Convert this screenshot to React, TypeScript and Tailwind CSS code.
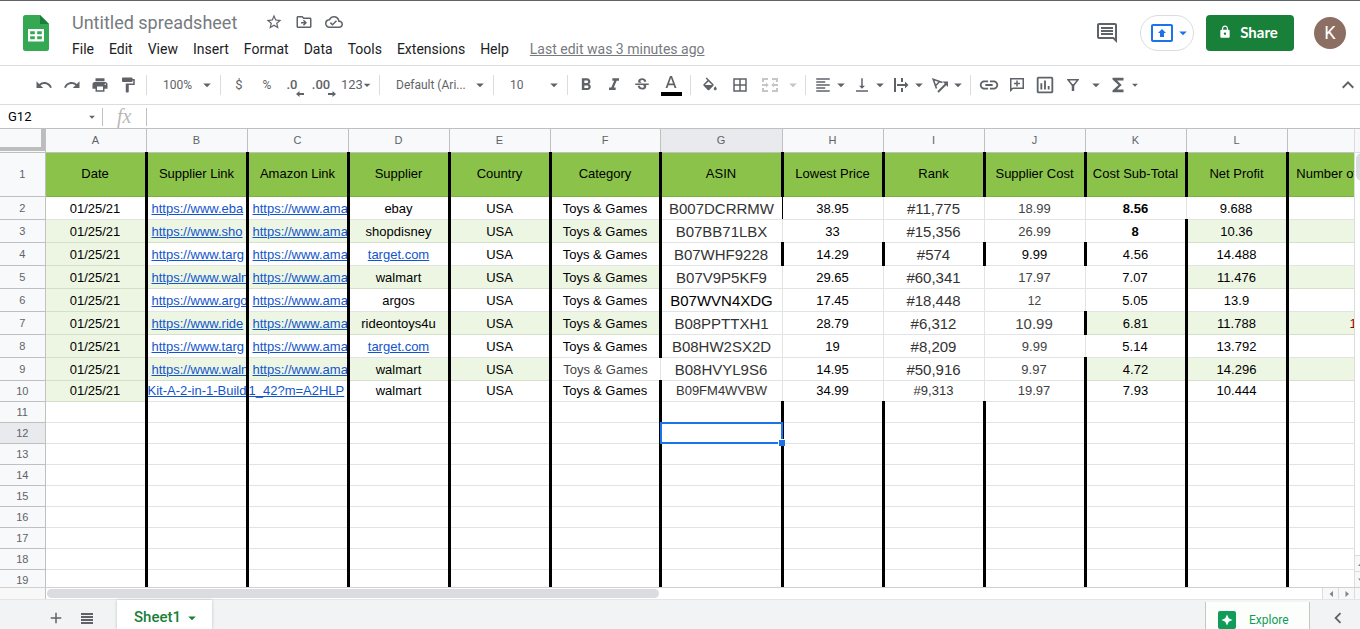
import type { ReactNode } from 'react';
import clsx from 'clsx';
import {
  MdAdd,
  MdArrowDropDown,
  MdBorderAll,
  MdChevronLeft,
  MdFormatAlignLeft,
  MdFormatBold,
  MdFormatItalic,
  MdFormatPaint,
  MdFunctions,
  MdInsertLink,
  MdKeyboardArrowUp,
  MdLock,
  MdOutlineCloudDone,
  MdOutlineDriveFileMove,
  MdOutlineInsertChart,
  MdOutlineInsertComment,
  MdPresentToAll,
  MdPrint,
  MdRedo,
  MdStarBorder,
  MdStrikethroughS,
  MdUndo,
  MdVerticalAlignBottom,
} from 'react-icons/md';

type Cell = {
  text: string;
  href?: string;
  className?: string;
};

const menus = ['File', 'Edit', 'View', 'Insert', 'Format', 'Data', 'Tools', 'Extensions', 'Help'];

const columns = [
  { key: 'A', title: 'Date', width: 'w-[101px]' },
  { key: 'B', title: 'Supplier Link', width: 'w-[101px]' },
  { key: 'C', title: 'Amazon Link', width: 'w-[101px]' },
  { key: 'D', title: 'Supplier', width: 'w-[101px]' },
  { key: 'E', title: 'Country', width: 'w-[101px]' },
  { key: 'F', title: 'Category', width: 'w-[110px]' },
  { key: 'G', title: 'ASIN', width: 'w-[122px]' },
  { key: 'H', title: 'Lowest Price', width: 'w-[101px]' },
  { key: 'I', title: 'Rank', width: 'w-[101px]' },
  { key: 'J', title: 'Supplier Cost', width: 'w-[101px]' },
  { key: 'K', title: 'Cost Sub-Total', width: 'w-[101px]' },
  { key: 'L', title: 'Net Profit', width: 'w-[101px]' },
  { key: 'M', title: 'Number of Reviews', width: 'w-[131px]' },
];

// supplier url, amazon url, supplier, asin, price, rank, cost, sub-total, profit, reviews
const products = [
  ['https://www.eba', 'https://www.ama', 'ebay', 'B007DCRRMW', '38.95', '#11,775', '18.99', '8.56', '9.688', ''],
  ['https://www.sho', 'https://www.ama', 'shopdisney', 'B07BB71LBX', '33', '#15,356', '26.99', '8', '10.36', ''],
  ['https://www.targ', 'https://www.ama', 'target.com', 'B07WHF9228', '14.29', '#574', '9.99', '4.56', '14.488', ''],
  ['https://www.waln', 'https://www.ama', 'walmart', 'B07V9P5KF9', '29.65', '#60,341', '17.97', '7.07', '11.476', ''],
  ['https://www.argo', 'https://www.ama', 'argos', 'B07WVN4XDG', '17.45', '#18,448', '12', '5.05', '13.9', ''],
  ['https://www.ride', 'https://www.ama', 'rideontoys4u', 'B08PPTTXH1', '28.79', '#6,312', '10.99', '6.81', '11.788', '1'],
  ['https://www.targ', 'https://www.ama', 'target.com', 'B08HW2SX2D', '19', '#8,209', '9.99', '5.14', '13.792', ''],
  ['https://www.waln', 'https://www.ama', 'walmart', 'B08HVYL9S6', '14.95', '#50,916', '9.97', '4.72', '14.296', ''],
  ['Kit-A-2-in-1-Build', '1_42?m=A2HLP', 'walmart', 'B09FM4WVBW', '34.99', '#9,313', '19.97', '7.93', '10.444', ''],
];

const rowNumbers = Array.from({ length: 19 }, (_, i) => i + 1);

// right edge of a cell: heavy rule, hairline, or plain gridline
function edge(col: string, row: number) {
  const thick = 'border-r-[3px] border-r-black';
  const thin = 'border-r border-r-[#e2e3e3]';
  if (row === 1 || row > 10) return col === 'M' ? thin : thick;
  switch (col) {
    case 'F':
      return row === 9 ? thin : thick;
    case 'G':
      if (row === 2) return 'border-r border-r-black';
      return row === 4 ? thick : thin;
    case 'H':
    case 'I':
      return row === 4 ? thick : thin;
    case 'J':
      return [4, 7, 9, 10].includes(row) ? thick : thin;
    case 'K':
      return row === 2 ? thin : thick;
    case 'M':
      return thin;
    default:
      return thick;
  }
}

function isShaded(col: string, row: number) {
  if (row < 3 || row > 10) return false;
  if (col === 'A') return true;
  if ('GHIJ'.includes(col) || row % 2 === 0) return false;
  if (col === 'F') return row !== 9;
  if (col === 'K') return row === 7 || row === 9;
  return true;
}

function cellAt(col: string, row: number): Cell {
  const p = products[row - 2];
  if (!p) return { text: '' };
  const last = row === 10;
  switch (col) {
    case 'A':
      return { text: '01/25/21' };
    case 'B':
      return { text: p[0], href: '#supplier', className: last ? 'text-left' : 'text-left pl-1' };
    case 'C':
      return { text: p[1], href: '#amazon', className: last ? 'text-left' : 'text-left pl-1' };
    case 'D':
      return { text: p[2], href: p[2] === 'target.com' ? '#target' : undefined };
    case 'E':
      return { text: 'USA' };
    case 'F':
      return { text: 'Toys & Games', className: row === 9 ? 'text-[#434343]' : '' };
    case 'G':
      return { text: p[3], className: clsx(!last && 'text-[15px]', row !== 6 && 'text-[#333333]') };
    case 'H':
      return { text: p[4] };
    case 'I':
      return { text: p[5], className: clsx('text-[#333333]', !last && 'text-[15px]') };
    case 'J':
      return { text: p[6], className: clsx(row !== 4 && 'text-[#434343]', row === 7 && 'text-[15px]', row === 6 && 'text-xs') };
    case 'K':
      return { text: p[7], className: row < 4 ? 'font-bold' : '' };
    case 'L':
      return { text: p[8] };
    default:
      return { text: p[9], className: 'text-[#980000]' };
  }
}

function SheetsLogo() {
  return (
    <svg viewBox="0 0 26 36" className="h-9 w-[26px]" aria-label="Sheets home">
      <path d="M2.5 0H17l9 9v24.5a2.5 2.5 0 0 1-2.5 2.5h-21A2.5 2.5 0 0 1 0 33.500V2.500A2.500 2.500 0 0 1 2.500 0z" fill="#34a853" />
      <path d="M17 0l9 9h-9z" fill="#188038" />
      <path d="M5 14h16v12.500H5z" fill="#fff" />
      <path d="M7.200 16.300h4.600v2.900H7.200zM14.200 16.300h4.600v2.900h-4.600zM7.200 21.300h4.600v2.900H7.200zM14.200 21.300h4.600v2.900h-4.600z" fill="#34a853" />
    </svg>
  );
}

function Caret({ small }: { small?: boolean }) {
  return <MdArrowDropDown className={clsx('shrink-0', small ? 'size-3.5' : 'size-[18px]')} />;
}

function ToolButton({ label, className = 'w-7', children }: { label: string; className?: string; children: ReactNode }) {
  return (
    <button type="button" aria-label={label} title={label} className={clsx('flex h-7 shrink-0 items-center justify-center', className)}>
      {children}
    </button>
  );
}

function DropTool({ label, children }: { label: string; children: ReactNode }) {
  return (
    <button type="button" aria-label={label} title={label} className="flex h-7 w-[39px] shrink-0 items-center pl-1">
      {children}
      <Caret />
    </button>
  );
}

function ToolSelect({ label, value, className }: { label: string; value: string; className: string }) {
  return (
    <label className={clsx('flex h-7 shrink-0 items-center pl-3', className)}>
      <select aria-label={label} className="min-w-0 flex-1 appearance-none bg-transparent text-xs outline-none">
        <option>{value}</option>
      </select>
      <Caret />
    </label>
  );
}

function Separator() {
  return <div className="mx-1 h-5 w-px shrink-0 bg-[#dadce0]" />;
}

function Decimal({ text, more }: { text: string; more?: boolean }) {
  return (
    <span className="relative text-[13px] leading-4 font-medium">
      {text}
      <svg viewBox="0 0 8 6" className={clsx('absolute -right-1.5 -bottom-1 h-1.5 w-2', more && 'rotate-180')}>
        <path d="M0 3l3.500-3v2H8v2H3.500v2z" fill="currentColor" />
      </svg>
    </span>
  );
}

function Header() {
  return (
    <header className="flex h-[66px] shrink-0 items-start justify-between border-t border-b border-t-[#5f6368] border-b-[#dadce0] pr-3.5 pl-[23px]">
      <div className="flex pt-3.5">
        <a href="#home">
          <SheetsLogo />
        </a>
        <div className="-mt-1 ml-[23px]">
          <div className="flex h-6 items-center text-[#5f6368]">
            <h1 className="text-[18px] leading-6 text-[#777b80]">Untitled spreadsheet</h1>
            <div className="mb-0.5 ml-7 flex items-center gap-3">
              <button type="button" aria-label="Star"><MdStarBorder className="size-[18px]" /></button>
              <button type="button" aria-label="Move"><MdOutlineDriveFileMove className="size-[18px]" /></button>
              <button type="button" aria-label="Saved to Drive"><MdOutlineCloudDone className="size-[18px]" /></button>
            </div>
          </div>
          <nav className="mt-1 flex h-5 items-center gap-[15px] text-sm text-[#202124]">
            {menus.map(m => (
              <button key={m} type="button">{m}</button>
            ))}
            <a href="#history" className="ml-1.5 text-[#777b80] underline">Last edit was 3 minutes ago</a>
          </nav>
        </div>
      </div>

      <div className="flex items-center pt-3.5">
        <button type="button" aria-label="Comments" className="mr-[21px] text-[#5f6368]">
          <MdOutlineInsertComment className="size-6" />
        </button>
        <button type="button" aria-label="Present" className="mr-3 flex h-9 w-[54px] items-center justify-center rounded-full border border-[#dadce0] pl-2 text-[#1a73e8]">
          <MdPresentToAll className="size-6 shrink-0" />
          <Caret />
        </button>
        <button type="button" className="mr-5 flex h-9 w-[88px] items-center justify-center gap-2 rounded bg-[#188038] pr-1 pb-0.5 font-['Lato',sans-serif] text-[15px] font-bold text-white">
          <MdLock className="size-3.5" />
          Share
        </button>
        <button type="button" aria-label="Account" className="size-8 rounded-full bg-[#8d6e63] text-lg text-white">K</button>
      </div>
    </header>
  );
}

function Toolbar() {
  const icon = 'size-[18px] shrink-0';
  return (
    <div className="flex h-[39px] shrink-0 items-center border-b border-[#dadce0] pl-[30px] text-xs text-[#5f6368]">
      <ToolButton label="Undo"><MdUndo className={icon} /></ToolButton>
      <ToolButton label="Redo"><MdRedo className={icon} /></ToolButton>
      <ToolButton label="Print"><MdPrint className={icon} /></ToolButton>
      <ToolButton label="Paint format"><MdFormatPaint className={icon} /></ToolButton>
      <Separator />
      <ToolSelect label="Zoom" value="100%" className="w-[65px]" />
      <Separator />
      <ToolButton label="Currency"><span className="text-[13px]">$</span></ToolButton>
      <ToolButton label="Percent">%</ToolButton>
      <ToolButton label="Fewer decimals" className="w-7 pr-1.5"><Decimal text=".0" /></ToolButton>
      <ToolButton label="More decimals" className="w-7 pr-1"><Decimal text=".00" more /></ToolButton>
      <ToolButton label="More formats" className="w-[38px] pl-1">
        <span className="text-[13px]">123</span>
        <MdArrowDropDown className="-ml-1 size-[18px]" />
      </ToolButton>
      <Separator />
      <ToolSelect label="Font" value="Default (Ari..." className="w-[105px]" />
      <Separator />
      <ToolSelect label="Font size" value="10" className="w-[65px]" />
      <Separator />
      <ToolButton label="Bold"><MdFormatBold className="size-5" /></ToolButton>
      <ToolButton label="Italic"><MdFormatItalic className="size-5" /></ToolButton>
      <ToolButton label="Strikethrough"><MdStrikethroughS className={icon} /></ToolButton>
      <ToolButton label="Text color" className="w-[30px]">
        <svg viewBox="0 0 22 22" className="size-[22px]">
          <path d="M10 2L5.500 14h1.900l1-2.800h5.200l1 2.800h1.900L12 2zm-1 7.500L11 4l2 5.500z" fill="currentColor" />
          <path d="M1 18h21v4H1z" fill="#000" />
        </svg>
      </ToolButton>
      <Separator />
      <ToolButton label="Fill color" className="w-[30px]">
        <svg viewBox="0 -2 24 24" className={icon} fill="currentColor">
          <path d="M16.560 8.940L7.620 0 6.210 1.410l2.380 2.380-5.150 5.150c-.59.59-.59 1.540 0 2.120l5.500 5.500c.29.29.68.44 1.060.44s.77-.15 1.060-.44l5.500-5.500c.59-.58.59-1.530 0-2.120zM5.210 10L10 5.210 14.790 10H5.210zM19 11.500s-2 2.170-2 3.500c0 1.100.9 2 2 2s2-.9 2-2c0-1.330-2-3.500-2-3.500z" />
        </svg>
      </ToolButton>
      <ToolButton label="Borders" className="w-[30px]"><MdBorderAll className={icon} /></ToolButton>
      <ToolButton label="Merge cells" className="w-[30px] text-[#c4c6c8]">
        <svg viewBox="0 0 16 14" className="h-3.5 w-4" fill="none" stroke="currentColor" strokeWidth="2">
          <path d="M1 4V1h5M10 1h5v3M1 10v3h5M10 13h5v-3M0 7h5M16 7h-5" />
          <path d="M4 4.500v5L6.800 7zM12 4.500v5L9.200 7z" fill="currentColor" stroke="none" />
        </svg>
      </ToolButton>
      <ToolButton label="Merge type" className="w-4 text-[#c4c6c8]"><Caret /></ToolButton>
      <Separator />
      <DropTool label="Horizontal align"><MdFormatAlignLeft className={icon} /></DropTool>
      <DropTool label="Vertical align"><MdVerticalAlignBottom className={icon} /></DropTool>
      <DropTool label="Text wrapping">
        <svg viewBox="0 0 18 18" className={icon} fill="none" stroke="currentColor" strokeWidth="2">
          <path d="M3 2v14M10 2v4M10 12v4M5 9h9" />
          <path d="M13 5.500L16.500 9 13 12.500z" fill="currentColor" stroke="none" />
        </svg>
      </DropTool>
      <DropTool label="Text rotation">
        <svg viewBox="0 0 18 18" className={icon} fill="none" stroke="currentColor" strokeWidth="1.600">
          <path d="M5.500 12.500L2.200 3.200l9.300 3.300M8.700 5.500L4.500 9.700" />
          <path d="M7 16l8-8" strokeWidth="2" />
          <path d="M11.500 5.500H17V11z" fill="currentColor" stroke="none" />
        </svg>
      </DropTool>
      <Separator />
      <ToolButton label="Insert link"><MdInsertLink className="size-[22px]" /></ToolButton>
      <ToolButton label="Insert comment">
        <svg viewBox="0 0 14 14" className="size-3.5" fill="none" stroke="currentColor">
          <path d="M.75 13V.75h12.500v9.500H2.500" strokeWidth="1.500" />
          <path d="M0 14v-4h4z" fill="currentColor" stroke="none" />
          <path d="M7 2.500v6M4 5.500h6" strokeWidth="1.500" />
        </svg>
      </ToolButton>
      <ToolButton label="Insert chart"><MdOutlineInsertChart className="size-[22px]" /></ToolButton>
      <ToolButton label="Filter">
        <svg viewBox="0 0 12 12" className="size-3" fill="none" stroke="currentColor" strokeWidth="1.500">
          <path d="M1 .75h10L6.800 6H5.200z" />
          <path d="M6 5v7" strokeWidth="2.500" />
        </svg>
      </ToolButton>
      <ToolButton label="Filter views" className="w-[18px]"><Caret /></ToolButton>
      <ToolButton label="Functions" className="w-[26px]"><MdFunctions className="size-[22px]" /></ToolButton>
      <ToolButton label="More functions" className="w-2"><Caret small /></ToolButton>
      <button type="button" aria-label="Hide the menus" className="ml-auto">
        <MdKeyboardArrowUp className="size-6" />
      </button>
    </div>
  );
}

function FormulaBar() {
  return (
    <div className="flex h-6 shrink-0 items-center border-b border-[#c0c0c0]">
      <input aria-label="Name box" defaultValue="G12" className="w-[85px] pl-2 text-[13px] text-black outline-none" />
      <span className="flex w-[17px] items-center text-[#5f6368]"><Caret small /></span>
      <div className="h-[18px] w-px bg-[#c0c0c0]" />
      <span className="w-[43px] pb-0.5 pl-3.5 font-['Liberation_Serif',serif] text-xl leading-5 text-[#b8b8b8] italic">fx</span>
      <div className="h-[18px] w-px bg-[#c0c0c0]" />
      <input aria-label="Formula" className="min-w-0 flex-1 px-2 text-[13px] outline-none" />
    </div>
  );
}

function Grid() {
  return (
    <table className="w-[1418px] table-fixed border-collapse font-['Liberation_Sans',sans-serif] text-[13px] leading-4 text-black">
      <colgroup>
        <col className="w-[45px]" />
        {columns.map(c => (
          <col key={c.key} className={c.width} />
        ))}
      </colgroup>
      <thead>
        <tr className="h-[23px] bg-[#f8f9fa] text-[11px] text-[#5f6368]">
          <th className="border-r border-b border-[#c0c0c0] p-0 align-top">
            <div className="h-[22px] border-r-4 border-b-4 border-[#bdbdbd]" />
          </th>
          {columns.map(c => (
            <th key={c.key} className={clsx('border-r border-b border-[#c0c0c0] p-0 font-normal', c.key === 'G' && 'bg-[#e8eaed]')}>
              {c.key === 'M' ? '' : c.key}
            </th>
          ))}
        </tr>
      </thead>
      <tbody>
        {rowNumbers.map(row => (
          <tr key={row} className={row === 1 ? 'h-11' : row < 10 ? 'h-[23px]' : 'h-[21px]'}>
            <th
              className={clsx(
                'border-r border-b border-[#c0c0c0] p-0 text-[11px] leading-4 font-normal text-[#5f6368]',
                row === 12 ? 'bg-[#e8eaed]' : 'bg-[#f8f9fa]',
              )}
            >
              {row}
            </th>
            {columns.map(c => {
              const selected = c.key === 'G' && row === 12;
              const cell: Cell = row === 1 ? { text: c.title } : cellAt(c.key, row);
              return (
                <td
                  key={c.key}
                  className={clsx(
                    'border-b p-0 whitespace-nowrap',
                    row === 1 ? 'border-b-[#7fb043] bg-[#8bc34a] text-center align-middle' : 'align-bottom',
                    row > 1 && (isShaded(c.key, row) ? 'border-b-[#d6decd] bg-[#edf6e3]' : 'border-b-[#e2e3e3]'),
                    edge(c.key, row),
                    selected ? 'relative' : 'overflow-hidden',
                  )}
                >
                  {cell.text && (
                    <div className={clsx('overflow-hidden text-center', row > 1 && 'pb-0.5', cell.className)}>
                      {cell.href ? <a href={cell.href} className="text-[#1155cc] underline">{cell.text}</a> : cell.text}
                    </div>
                  )}
                  {selected && (
                    <div className="absolute -inset-x-0.5 -inset-y-px border-2 border-[#1a73e8]">
                      <div className="absolute -right-1 -bottom-1 size-[7px] border-t border-l border-white bg-[#1a73e8]" />
                    </div>
                  )}
                </td>
              );
            })}
          </tr>
        ))}
      </tbody>
    </table>
  );
}

function ScrollArrow({ label, d, className }: { label: string; d: string; className: string }) {
  return (
    <button type="button" aria-label={label} className={clsx('flex shrink-0 items-center justify-center border-[#dadce0] bg-[#f8f8f8] text-[#80868b]', className)}>
      <svg viewBox="0 0 6 6" className="size-1.5 shrink-0">
        <path d={d} fill="currentColor" />
      </svg>
    </button>
  );
}

function BottomBar() {
  return (
    <footer className="flex h-[30px] shrink-0 border-t border-[#e3e5e8] bg-[#f1f3f4] text-[#5f6368]">
      <button type="button" aria-label="Add sheet" className="ml-[47px] flex w-[18px] items-center pt-1.5">
        <MdAdd className="size-[18px]" />
      </button>
      <button type="button" aria-label="All sheets" className="ml-4 flex w-3 items-center pt-2">
        <svg viewBox="0 0 12 11" className="h-[11px] w-3">
          <path d="M0 0h12v2H0zM0 3h12v2H0zM0 6h12v2H0zM0 9h12v2H0z" fill="currentColor" />
        </svg>
      </button>
      <button type="button" className="ml-6 flex w-[95px] items-center justify-center gap-0.5 bg-white pt-1.5 pl-1.5 text-[15px] font-medium text-[#188038] shadow-[0_0_3px_#c0c0c0]">
        Sheet1
        <Caret />
      </button>
      <button type="button" className="mt-0.5 ml-auto flex w-[105px] items-center border-x border-[#c4c7c5] bg-[#fbfefb] pt-2 pl-3 text-xs text-[#0f9d58]">
        <svg viewBox="0 0 18 20" className="mt-0.5 h-5 w-[18px]">
          <path d="M2 0h14a2 2 0 0 1 2 2v14a2 2 0 0 1-2 2h-4.500L9 20l-2.500-2H2a2 2 0 0 1-2-2V2a2 2 0 0 1 2-2z" fill="#0f9d58" />
          <path d="M9 3.500l1.700 3.800L14.500 9l-3.800 1.700L9 14.500l-1.700-3.800L3.500 9l3.800-1.700z" fill="#fff" />
        </svg>
        <span className="ml-[13px]">Explore</span>
      </button>
      <button type="button" aria-label="Show side panel" className="ml-[17px] flex w-[33px] items-center pt-1.5">
        <MdChevronLeft className="size-[22px]" />
      </button>
    </footer>
  );
}

export default function App() {
  return (
    <div className="flex h-screen flex-col overflow-hidden bg-white font-['Roboto',sans-serif]">
      <Header />
      <Toolbar />
      <FormulaBar />
      <main className="flex min-h-0 flex-1">
        <div className="min-w-0 flex-1 overflow-hidden">
          <Grid />
        </div>
        <div className="flex w-1.5 shrink-0 flex-col overflow-hidden border-l border-[#dadce0]">
          <div className="h-6 shrink-0 border-b border-[#dadce0] bg-[#f8f8f8]" />
          <div className="ml-px h-7 w-3 rounded-full bg-[#dadce0]" />
          <ScrollArrow label="Scroll up" d="M0 5l3-3.500L6 5z" className="mt-auto h-4 w-3 border-t" />
          <ScrollArrow label="Scroll down" d="M0 1.500h6L3 5z" className="h-4 w-3 border-t" />
        </div>
      </main>
      <div className="flex h-3 shrink-0 border-t border-[#d0d0d0]">
        <div className="w-[46px] shrink-0 border-r border-[#c0c0c0] bg-[#f8f8f8]" />
        <div className="min-w-0 flex-1 py-px pl-px">
          <div className="h-[9px] w-[48%] rounded-full bg-[#dadce0]" />
        </div>
        <ScrollArrow label="Scroll left" d="M5 0v6L1.500 3z" className="w-4 border-l" />
        <ScrollArrow label="Scroll right" d="M1.500 0v6L5 3z" className="w-4 border-l" />
        <div className="w-1.5 shrink-0 border-l border-[#dadce0] bg-[#f8f8f8]" />
      </div>
      <BottomBar />
    </div>
  );
}
